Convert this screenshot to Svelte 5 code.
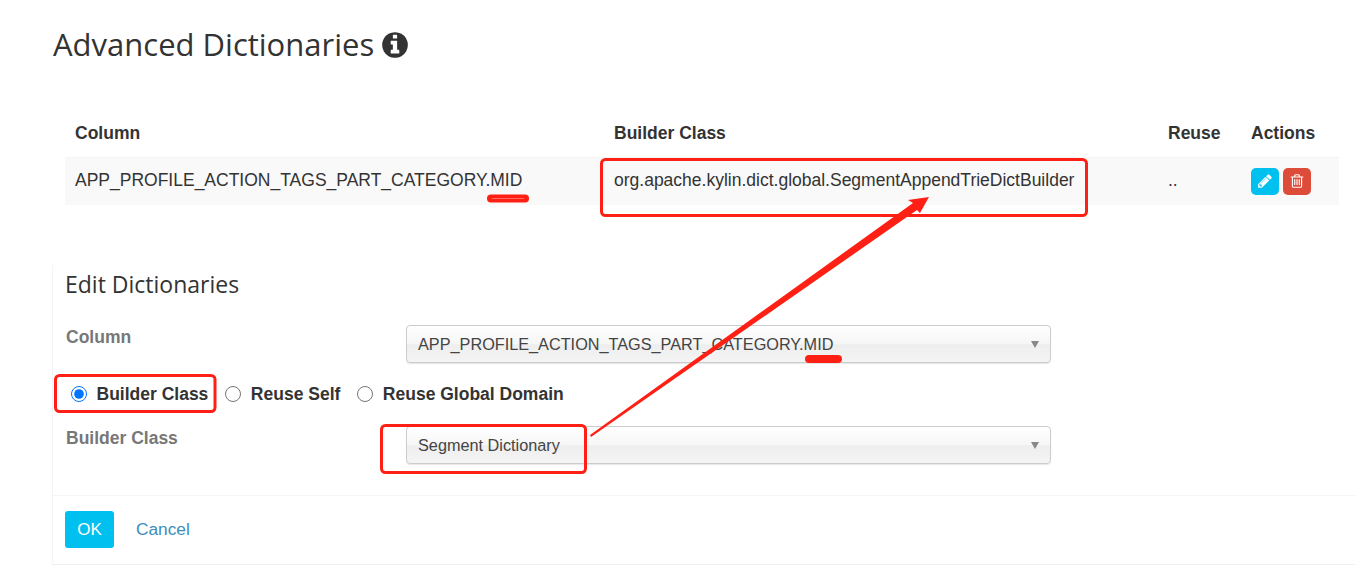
<script>
  const rows = [
    {
      column: 'APP_PROFILE_ACTION_TAGS_PART_CATEGORY.MID',
      builder: 'org.apache.kylin.dict.global.SegmentAppendTrieDictBuilder',
      reuse: '..',
    },
  ]

  const boxes = [
    { x: 601.5, y: 159.5, w: 485, h: 56 },
    { x: 55.5, y: 375.5, w: 159.5, h: 36 },
    { x: 381.5, y: 425.5, w: 204, h: 47 },
  ]
</script>

<div class="page">
  <h1>Advanced Dictionaries
    <svg class="info" viewBox="0 0 1536 1792" aria-hidden="true">
      <path d="M1024 1376v-160q0-14-9-23t-23-9h-96v-512q0-14-9-23t-23-9h-320q-14 0-23 9t-9 23v160q0 14 9 23t23 9h96v320h-96q-14 0-23 9t-9 23v160q0 14 9 23t23 9h448q14 0 23-9t9-23zm-128-896v-160q0-14-9-23t-23-9h-192q-14 0-23 9t-9 23v160q0 14 9 23t23 9h192q14 0 23-9t9-23zm640 416q0 209-103 385.5t-279.5 279.5-385.5 103-385.5-103-279.5-279.5-103-385.5 103-385.5 279.5-279.5 385.5-103 385.5 103 279.5 279.5 103 385.5z"/>
    </svg>
  </h1>

  <table>
    <thead>
      <tr>
        <th class="c1">Column</th>
        <th class="c2">Builder Class</th>
        <th class="c3">Reuse</th>
        <th>Actions</th>
      </tr>
    </thead>
    <tbody>
      {#each rows as row}
        <tr>
          <td>{row.column}</td>
          <td>{row.builder}</td>
          <td>{row.reuse}</td>
          <td class="actions">
            <button class="icon-btn info-btn" aria-label="Edit">
              <svg viewBox="0 0 1792 1792"><path d="M491 1536l91-91-235-235-91 91v107h128v128h107zm523-928q0-22-22-22-10 0-17 7l-542 542q-7 7-7 17 0 22 22 22 10 0 17-7l542-542q7-7 7-17zm-54-192l416 416-832 832h-416v-416zm683 96q0 53-37 90l-166 166-416-416 166-165q36-38 90-38 53 0 91 38l235 234q37 39 37 91z"/></svg>
            </button>
            <button class="icon-btn danger-btn" aria-label="Delete">
              <svg viewBox="0 0 1792 1792"><path d="M704 736v576q0 14-9 23t-23 9h-64q-14 0-23-9t-9-23v-576q0-14 9-23t23-9h64q14 0 23 9t9 23zm256 0v576q0 14-9 23t-23 9h-64q-14 0-23-9t-9-23v-576q0-14 9-23t23-9h64q14 0 23 9t9 23zm256 0v576q0 14-9 23t-23 9h-64q-14 0-23-9t-9-23v-576q0-14 9-23t23-9h64q14 0 23 9t9 23zm128 724v-948h-896v948q0 22 7 40.5t14.5 27 10.5 8.5h832q3 0 10.5-8.5t14.5-27 7-40.5zm-672-1076h448l-48-117q-7-9-17-11h-317q-10 2-17 11zm928 32v64q0 14-9 23t-23 9h-96v948q0 83-47 143.5t-113 60.5h-832q-66 0-113-58.5t-47-141.5v-952h-96q-14 0-23-9t-9-23v-64q0-14 9-23t23-9h309l70-167q15-37 54-63t79-26h320q40 0 79 26t54 63l70 167h309q14 0 23 9t9 23z"/></svg>
            </button>
          </td>
        </tr>
      {/each}
    </tbody>
  </table>

  <section class="panel">
    <h2>Edit Dictionaries</h2>

    <div class="field first">
      <span class="label">Column</span>
      <div class="select">APP_PROFILE_ACTION_TAGS_PART_CATEGORY.MID<i class="caret"></i></div>
    </div>

    <div class="radios">
      <label><input type="radio" name="kind" checked />Builder Class</label>
      <label><input type="radio" name="kind" />Reuse Self</label>
      <label><input type="radio" name="kind" />Reuse Global Domain</label>
    </div>

    <div class="field">
      <span class="label">Builder Class</span>
      <div class="select">Segment Dictionary<i class="caret"></i></div>
    </div>

    <div class="footer">
      <button class="ok">OK</button>
      <span class="cancel">Cancel</span>
    </div>
  </section>

  <!-- hand drawn markup on top of the screenshot -->
  <svg class="marks" width="1355" height="565" viewBox="0 0 1355 565" aria-hidden="true">
    {#each boxes as b}
      <rect x={b.x} y={b.y} width={b.w} height={b.h} rx="4" />
    {/each}
    <line x1="491" y1="198.5" x2="525" y2="198.5" class="under" />
    <line x1="492" y1="198.5" x2="524" y2="198.5" class="under-core" />
    <line x1="809" y1="359" x2="838" y2="359" class="under" />
    <polygon class="arrow" points="590,435 913,203 908,200 929,197 920,213 917,210 591,437" />
  </svg>
</div>

<style>
  :global(body) {
    margin: 0;
    background: #fff;
    color: #333;
    font-family: "Liberation Sans", Arial, sans-serif;
  }

  .page {
    position: relative;
    width: 1355px;
    height: 565px;
    overflow: hidden;
    padding: 24px 16px 0 53px;
    box-sizing: border-box;
  }

  h1 {
    margin: 0 0 45px;
    font-family: "Open Sans", sans-serif;
    font-weight: 400;
    font-size: 31px;
    line-height: 41px;
    display: flex;
    align-items: center;
    gap: 8px;
  }

  .info { width: 26px; height: 30px; fill: #333; }

  table {
    width: 1274px;
    margin-left: 12px;
    border-collapse: collapse;
    table-layout: fixed;
    font-size: 17.5px;
  }

  th {
    text-align: left;
    font-size: 17.5px;
    height: 47px;
    padding: 0 10px;
    box-sizing: border-box;
    border-bottom: 1px solid #f4f4f4;
  }
  .c1 { width: 539px; }
  .c2 { width: 554px; }
  .c3 { width: 83px; }

  td {
    height: 48px;
    padding: 0 10px 1px;
    box-sizing: border-box;
    background: #f9f9f9;
  }

  td.actions { padding-bottom: 0; }

  .icon-btn {
    width: 28px;
    height: 27px;
    padding: 0;
    border: 0;
    border-radius: 5px;
    vertical-align: middle;
    margin-right: -1px;
  }
  .icon-btn svg { display: block; margin: 0 auto; width: 16px; height: 16px; fill: #fff; }
  .info-btn { background: #00c0ef; }
  .danger-btn { background: #dd4b39; }

  .panel {
    margin: 60px -16px 0 -1px;
    height: 300px;
    box-sizing: border-box;
    padding: 0 0 0 12px;
    border-left: 1px solid #f4f4f4;
    border-bottom: 1px solid #f0f0f0;
  }

  h2 {
    margin: 0;
    padding-top: 3px;
    font-family: "Open Sans", sans-serif;
    font-weight: 400;
    font-size: 23px;
    line-height: 32px;
  }

  .field {
    display: flex;
    width: 986px;
  }
  .field.first { margin-top: 25px; }

  .label {
    width: 340px;
    margin-left: 1px;
    font-size: 17.5px;
    font-weight: bold;
    color: #777;
    line-height: 24px;
  }

  .select {
    position: relative;
    width: 645px;
    height: 38px;
    box-sizing: border-box;
    padding-left: 11px;
    line-height: 36px;
    font-size: 16.25px;
    color: #444;
    border: 1px solid #ccc;
    border-radius: 4px;
    background: linear-gradient(#fff 0%, #f6f6f6 50%, #eee 52%, #f4f4f4 100%);
    box-shadow: 0 1px 1px rgba(0, 0, 0, 0.1);
  }

  .caret {
    position: absolute;
    right: 11px;
    top: 15px;
    border-left: 4px solid transparent;
    border-right: 4px solid transparent;
    border-top: 7px solid #888;
  }

  .radios {
    display: flex;
    gap: 17px;
    height: 24px;
    margin: 19px 0 20px 6px;
    font-size: 17.5px;
    font-weight: bold;
    line-height: 24px;
  }
  .radios label { display: flex; align-items: center; }
  .radios input { width: 16px; height: 16px; margin: 0 9.5px 0 0; }

  .footer {
    display: flex;
    align-items: center;
    gap: 22px;
    height: 67px;
    margin-top: 31px;
    margin-left: -12px;
    padding-left: 12px;
    border-top: 1px solid #f4f4f4;
  }

  .ok {
    width: 49px;
    height: 37px;
    border: 0;
    border-radius: 3px;
    background: #00c0ef;
    color: #fff;
    font: inherit;
    font-size: 17px;
  }

  .cancel { color: #3c8dbc; font-size: 17.3px; }

  .marks {
    position: absolute;
    left: 0;
    top: 0;
    pointer-events: none;
  }
  .marks rect { fill: none; stroke: #ff2015; stroke-width: 3; }
  .under { stroke: #ff2015; stroke-width: 8; stroke-linecap: round; }
  .under-core { stroke: #ff6a60; stroke-width: 1; }
  .arrow { fill: #ff2015; }
</style>
